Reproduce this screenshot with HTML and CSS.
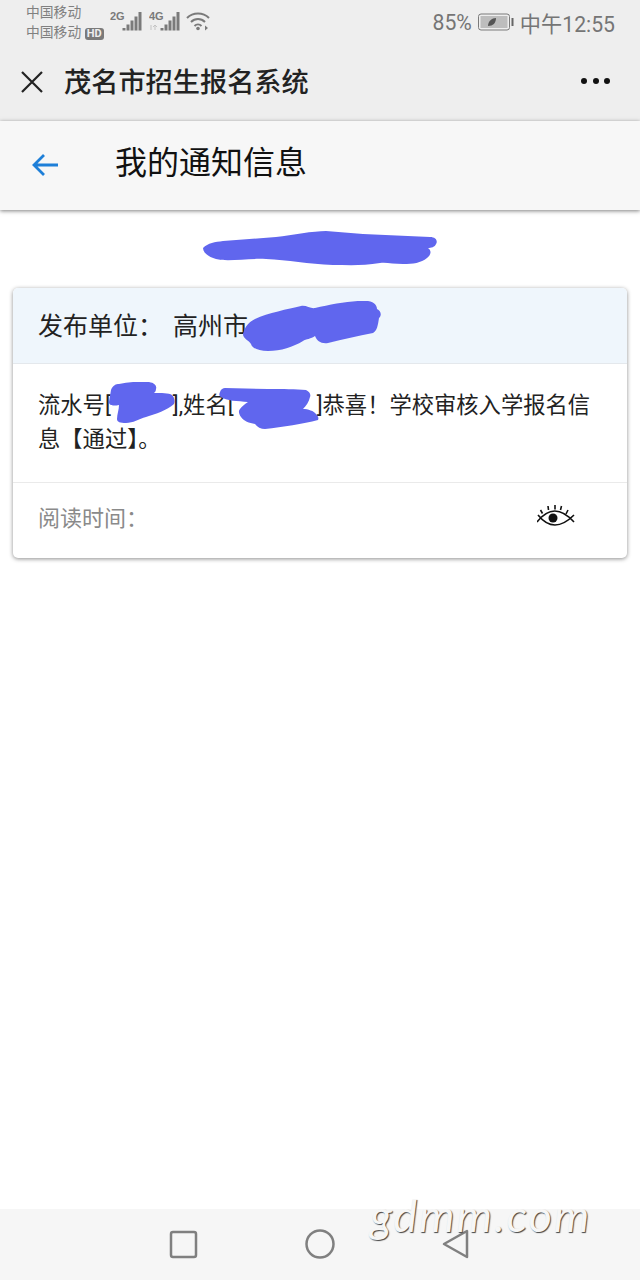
FILE: index.html
```html
<!DOCTYPE html>
<html lang="zh-CN">
<head>
	<meta charset="UTF-8">
	<title>我的通知信息</title>
	<link rel="stylesheet" href="styles.css">
</head>
<body>
	<div class="phone">
		<header class="top">
			<div class="status">
				<div class="carrier">
					<span>中国移动</span>
					<span>中国移动 <b class="hd">HD</b></span>
				</div>
				<div class="signal">
					<svg width="34" height="22" viewBox="0 0 34 22">
						<text x="0" y="9" class="net">2G</text>
						<g fill="#7a7a7a">
							<rect x="12.500" y="17" width="3" height="2.500"/>
							<rect x="16.500" y="13.500" width="3" height="6"/>
							<rect x="20.500" y="9.500" width="3" height="10"/>
							<rect x="24.500" y="5.500" width="3" height="14"/>
							<rect x="28.500" y="1" width="3" height="18.500"/>
						</g>
					</svg>
					<svg width="32" height="22" viewBox="0 0 32 22">
						<text x="0" y="9" class="net">4G</text>
						<path d="M2 19v-5M6 14v5M8 16l-2-2-2 2" fill="none" stroke="#c4c4c4" stroke-width="1"/>
						<g fill="#7a7a7a">
							<rect x="11.500" y="17" width="3" height="2.500"/>
							<rect x="15.500" y="13.500" width="3" height="6"/>
							<rect x="19.500" y="9.500" width="3" height="10"/>
							<rect x="23.500" y="5.500" width="3" height="14"/>
							<rect x="27.500" y="1" width="3" height="18.500"/>
						</g>
					</svg>
					<svg width="26" height="22" viewBox="0 0 26 22" fill="none" stroke="#7a7a7a" stroke-width="2">
						<path d="M1 7c6-6 16-6 22 0"/>
						<path d="M5 11c4-4 10-4 14 0"/>
						<path d="M8.500 15c2-2 5-2 7 0"/>
						<circle cx="12" cy="17.500" r="1.800" fill="#7a7a7a" stroke="none"/>
						<path d="M19 14.500l3 2.500-3 2.500z" fill="#7a7a7a" stroke="none"/>
					</svg>
				</div>
				<div class="status-right">
					<span>85%</span>
					<svg width="36" height="18" viewBox="0 0 36 18">
						<rect x="0.500" y="1" width="31" height="16" rx="2.500" fill="#eee" stroke="#7a7a7a" stroke-width="1"/>
						<rect x="2.500" y="3" width="27" height="12" fill="#bdbdbd"/>
						<rect x="33.500" y="5" width="2" height="8" fill="#666"/>
						<path d="M10 13c0-5 4-8 8-8 0 5-3 8-8 8z" fill="#555"/>
					</svg>
					<span>中午12:55</span>
				</div>
			</div>
			<div class="titlebar">
				<svg class="close" width="26" height="26" viewBox="0 0 26 26" fill="none" stroke="#222" stroke-width="2.200">
					<path d="M3 3l20 20M23 3L3 23"/>
				</svg>
				<h1>茂名市招生报名系统</h1>
				<div class="more"><i></i><i></i><i></i></div>
			</div>
		</header>

		<nav class="nav">
			<svg width="26" height="24" viewBox="0 0 26 24" fill="none" stroke="#1e7fd8" stroke-width="2.800">
				<path d="M26 12H2M12 2L2 12l10 10"/>
			</svg>
			<h2>我的通知信息</h2>
		</nav>

		<main class="content">
			<div class="notice-title">
				<svg class="scribble" width="234" height="35" viewBox="0 0 234 35">
					<path d="M0 17C5 12 12 11 20 10L73 6C90 4 110 0 123 0L160 3L227 6C233 6 235 10 233 13C232 16 228 17 225 17C229 20 228 24 224 27C218 32 210 33 200 33C190 33 183 31 177 32C160 35 145 34 130 34C105 33 85 29 63 28C45 27 25 31 13 28C6 26 0 22 0 17Z"/>
				</svg>
			</div>

			<section class="card">
				<div class="card-head">
					<span>发布单位：</span>
					<span class="unit">高州市<svg class="scribble blot" width="140" height="50" viewBox="0 0 140 50"><path d="M0 33C2 25 6 21 12 18C25 12 45 8 58 5C63 4 68 8 72 7C90 3 110-1 125 0C132 1 134 5 134 8C138 10 139 14 136 17C135 24 134 30 130 32C115 35 100 38 85 42C78 43 74 40 72 35C68 38 63 38 60 40C50 46 38 50 25 50C15 50 9 47 8 43C6 39 0 38 0 33Z"/></svg></span>
				</div>
				<div class="card-body">
					<p>流水号[<span class="hide hide-a"><svg class="scribble blot" width="66" height="42" viewBox="0 0 66 42"><path d="M2 8C4 3 7 2 10 2C20 0 32-1 40 0C46 1 48 4 47 7C47 9 46 10 45 11C52 11 60 11 63 13C66 16 66 20 65 22C58 28 47 32 37 35C30 37 24 41 17 41C11 41 8 40 8 37C8 32 10 28 10 23C5 24 0 24 0 20Z"/></svg></span>],姓名[<span class="hide hide-b"><svg class="scribble blot" width="101" height="43" viewBox="0 0 101 43"><path d="M2 5C3 2 5 1 7 1L50 2C65 2 78 2 88 3C92 5 93 8 92 10C91 15 88 19 85 22C90 22 96 24 98 27C100 29 101 31 100 33C85 37 65 40 47 42C43 42 39 40 37 37C31 36 26 34 23 30C21 27 20 24 22 22C24 19 27 17 30 15C20 14 8 14 3 10C1 9 1 7 2 5Z"/></svg></span>]恭喜！学校审核入学报名信息【通过】。</p>
				</div>
				<div class="card-foot">
					<span>阅读时间：</span>
					<svg width="38" height="22" viewBox="0 0 38 22" fill="none" stroke="#111" stroke-width="1.600">
						<path d="M0 17Q17-5 37 17M1 10Q17 30 37 10"/>
						<path d="M3.500 5l2 3.500M11 1l.5 4M18 0v4.500M24.500 1L23.500 5M31 5l-2 4"/>
						<circle cx="16" cy="13" r="4.500" fill="#111" stroke="none"/>
					</svg>
				</div>
			</section>
		</main>

		<footer class="sysbar">
			<span class="mark">gdmm.com</span>
			<svg width="30" height="30" viewBox="0 0 30 30" fill="none" stroke="#808080" stroke-width="2.500">
				<rect x="3" y="3" width="25" height="25" rx="2"/>
			</svg>
			<svg width="30" height="30" viewBox="0 0 30 30" fill="none" stroke="#808080" stroke-width="2.500">
				<circle cx="15" cy="15" r="13.500"/>
			</svg>
			<svg width="30" height="30" viewBox="0 0 30 30" fill="none" stroke="#808080" stroke-width="2.500" stroke-linejoin="round">
				<path d="M25 2v26L2 15z"/>
			</svg>
		</footer>
	</div>
</body>
</html>
```

FILE: styles.css
```css
* {
	margin: 0;
	padding: 0;
	box-sizing: border-box;
}
body {
	font-family: "Roboto", "Noto Sans CJK SC", sans-serif;
	background-color: #fff;
}
.phone {
	width: 640px;
	height: 1280px;
	display: flex;
	flex-direction: column;
	overflow: hidden;
}
.top {
	height: 121px;
	background-color: #eeeeee;
}
.status {
	height: 44px;
	display: flex;
	align-items: center;
	padding: 0 25px 0 26px;
	color: #808080;
}
.carrier {
	width: 84px;
	display: flex;
	flex-direction: column;
	gap: 2px;
	font-size: 13.800px;
	line-height: 18px;
	white-space: nowrap;
}
.hd {
	display: inline-block;
	background-color: #7a7a7a;
	color: #eee;
	font-size: 11px;
	line-height: 12px;
	padding: 0 2px;
	border-radius: 3px;
}
.signal {
	display: flex;
	align-items: center;
	gap: 5px;
	flex: 1;
}
.net {
	font: bold 11px "Liberation Sans Narrow", "Liberation Sans", sans-serif;
	fill: #7a7a7a;
}
.status-right {
	display: flex;
	align-items: center;
	gap: 6px;
	font-size: 21.200px;
	color: #757575;
}
.titlebar {
	height: 77px;
	display: flex;
	align-items: center;
	padding: 0 30px 2px 19px;
}
.titlebar h1 {
	flex: 1;
	margin-left: 19px;
	padding-top: 3px;
	font-size: 27.200px;
	line-height: 34px;
	font-weight: 500;
	color: #222;
}
.more {
	display: flex;
	gap: 5.500px;
	margin-bottom: 1px;
}
.more i {
	width: 6px;
	height: 6px;
	border-radius: 50%;
	background-color: #111;
}
.nav {
	height: 89px;
	display: flex;
	align-items: center;
	padding: 0 0 2px 32px;
	background-color: #f7f7f7;
	box-shadow: 0 1px 4px rgba(0, 0, 0, 0.5);
	position: relative;
}
.nav h2 {
	margin: 0 0 3px 57px;
	font-size: 32px;
	line-height: 40px;
	font-weight: 400;
	color: #111;
}
.content {
	flex: 1;
	padding: 0 13px;
}
.notice-title {
	height: 78px;
	display: flex;
	justify-content: center;
	padding-top: 21px;
}
.scribble path {
	fill: #6066ee;
}
.card {
	background-color: #fff;
	border-radius: 5px;
	overflow: hidden;
	box-shadow: 0 1px 4px rgba(0, 0, 0, 0.45);
}
.card-head {
	height: 76px;
	display: flex;
	align-items: center;
	padding: 2px 0 0 25px;
	gap: 10px;
	background-color: #eff6fc;
	border-bottom: 1px solid #e4e8ec;
	font-size: 25px;
	line-height: 30px;
	color: #222;
}
.unit {
	position: relative;
}
.unit .blot {
	position: absolute;
	left: 70px;
	top: -11px;
}
.card-body {
	padding: 24px 25px 26px;
	border-bottom: 1px solid #eaeaea;
	font-size: 22.300px;
	line-height: 34px;
	color: #222;
}
.hide {
	position: relative;
	display: inline-block;
	height: 34px;
	vertical-align: top;
}
.hide-a {
	width: 62px;
}
.hide-b {
	width: 83px;
}
.hide .blot {
	position: absolute;
}
.hide-a .blot {
	left: -2px;
	top: -6px;
}
.hide-b .blot {
	left: -16px;
	top: -1px;
}
.card-foot {
	height: 75px;
	display: flex;
	align-items: center;
	justify-content: space-between;
	padding: 0 52px 10px 25px;
	font-size: 22px;
	color: #8a8a8a;
}
.sysbar {
	height: 71px;
	position: relative;
	display: flex;
	align-items: center;
	background-color: #f6f6f6;
	padding: 0 0 2px 168px;
	gap: 107px;
}
.mark {
	position: absolute;
	left: 370px;
	top: -21px;
	font: italic 400 45px "Lato", "Liberation Sans", sans-serif;
	letter-spacing: 2px;
	color: #f6f6f6;
	text-shadow: 1px 1px 1px #444;
}
```
